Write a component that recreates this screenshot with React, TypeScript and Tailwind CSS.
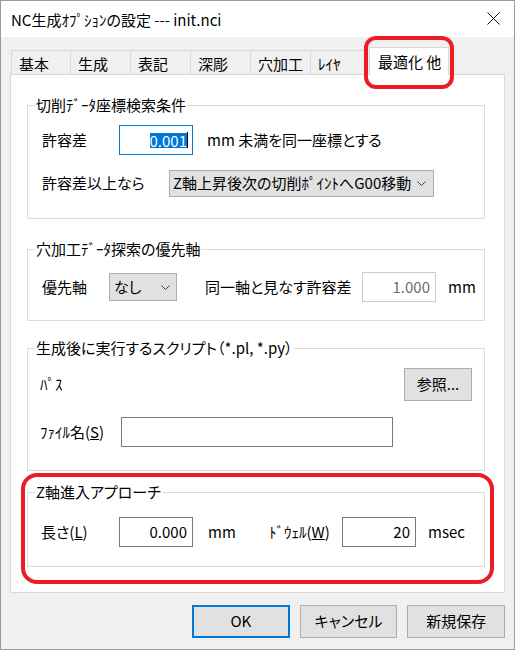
import React from "react";

function Chevron({ className }: { className?: string }) {
  return (
    <svg width="9" height="5" viewBox="0 0 9 5" className={className}>
      <polyline points="0.5,0.5 4.5,4.5 8.5,0.5" fill="none" stroke="#444" strokeWidth="1" />
    </svg>
  );
}

function Group({
  title,
  className,
  children,
}: {
  title: string;
  className: string;
  children: React.ReactNode;
}) {
  return (
    <fieldset className={`w-[458px] border border-[#dcdcdc] px-0 ${className}`}>
      <legend className="ml-[7px] px-[1px] leading-[20px]">{title}</legend>
      {children}
    </fieldset>
  );
}

function NumBox({ value, disabled }: { value: string; disabled?: boolean }) {
  return (
    <div
      className={`flex h-[30px] w-[74px] items-center justify-end border bg-white pr-[5px] ${
        disabled ? "border-[#cccccc] text-[#6d6d6d]" : "border-[#7a7a7a]"
      }`}
    >
      {value}
    </div>
  );
}

export default function App() {
  const tabs = ["基本", "生成", "表記", "深彫", "穴加工", "ﾚｲﾔ"];

  return (
    <div className="relative h-[650px] w-[515px] border border-[#9a9a9a] bg-[#f0f0f0] text-[15px] text-black font-['Noto_Sans_CJK_JP',sans-serif] [font-feature-settings:'palt']">
      {/* title bar */}
      <div className="flex h-[36px] items-center justify-between bg-white pl-[10px] pr-[14px] pt-[3px]">
        <span>NC生成ｵﾌﾟｼｮﾝの設定 --- init.nci</span>
        <svg width="13" height="13" viewBox="0 0 13 13" className="-mt-[4px]">
          <path d="M0.5 0.5 L12.5 12.5 M12.5 0.5 L0.5 12.5" stroke="#111" strokeWidth="1" />
        </svg>
      </div>

      <div className="px-[9px] pt-[10px]">
        {/* tab strip */}
        <div className="flex h-[27px] items-end pl-[1px]">
          {tabs.map((t, i) => (
            <div
              key={t}
              className={`flex h-[24px] items-center border-l border-t border-[#d9d9d9] pl-[7px] pt-[3px] ${
                i === 0 ? "w-[59px]" : "w-[60px]"
              }`}
            >
              {t}
            </div>
          ))}
          <div className="relative z-10 -mb-[1px] -ml-[1px] flex h-[28px] w-[80px] items-center border-x border-t border-[#d9d9d9] bg-white pl-[8px] pt-[1px]">
            最適化 他
          </div>
        </div>

        {/* tab panel */}
        <div className="h-[519px] w-[495px] border border-[#d9d9d9] bg-white pl-[16px] pt-[20px]">
          <Group title="切削ﾃﾞｰﾀ座標検索条件" className="h-[124px]">
            <div className="pl-[14px] pt-[10px]">
              <div className="flex h-[30px] items-center">
                <span className="w-[77px]">許容差</span>
                <div className="flex h-[30px] w-[74px] items-center justify-end border border-[#0078d7] bg-white pr-[4px]">
                  <span className="bg-[#0078d7] leading-[15px] text-white">0.001</span>
                  <span className="h-[16px] w-px bg-black" />
                </div>
                <span className="ml-[14px]">mm 未満を同一座標とする</span>
              </div>
              <div className="mt-[15px] flex h-[27px] items-center">
                <span className="w-[127px]">許容差以上なら</span>
                <div className="flex h-[27px] w-[265px] items-center justify-between border border-[#adadad] bg-[#e1e1e1] pl-[3px] pr-[7px]">
                  <span>Z軸上昇後次の切削ﾎﾟｲﾝﾄへG00移動</span>
                  <Chevron />
                </div>
              </div>
            </div>
          </Group>

          <Group title="穴加工ﾃﾞｰﾀ探索の優先軸" className="mt-[20px] h-[82px]">
            <div className="flex h-[30px] items-center pl-[14px] pt-[0px] mt-[13px]">
              <span className="w-[67px]">優先軸</span>
              <div className="flex h-[28px] w-[68px] items-center justify-between border border-[#adadad] bg-[#e1e1e1] pl-[4px] pr-[6px]">
                <span>なし</span>
                <Chevron />
              </div>
              <span className="ml-[28px] w-[157px]">同一軸と見なす許容差</span>
              <NumBox value="1.000" disabled />
              <span className="ml-[12px]">mm</span>
            </div>
          </Group>

          <Group title="生成後に実行するスクリプト（*.pl, *.py）" className="mt-[17px] h-[133px]">
            <div className="pl-[12px] pr-[12px] pt-[10px]">
              <div className="flex h-[33px] items-center justify-between">
                <span>ﾊﾟｽ</span>
                <div className="flex h-[33px] w-[68px] items-center justify-center border border-[#adadad] bg-[#e1e1e1]">
                  参照...
                </div>
              </div>
              <div className="mt-[16px] flex h-[30px] items-center">
                <span className="w-[81px]">
                  ﾌｧｲﾙ名(<span className="underline">S</span>)
                </span>
                <div className="h-[30px] w-[272px] border border-[#7a7a7a] bg-white" />
              </div>
            </div>
          </Group>

          <Group title="Z軸進入アプローチ" className="mt-[11px] h-[85px]">
            <div className="flex h-[30px] items-center pl-[13px] mt-[15px]">
              <span className="w-[78px]">
                長さ(<span className="underline">L</span>)
              </span>
              <NumBox value="0.000" />
              <span className="ml-[15px] w-[61px]">mm</span>
              <span className="w-[73px]">
                ﾄﾞｳｪﾙ(<span className="underline">W</span>)
              </span>
              <NumBox value="20" />
              <span className="ml-[12px]">msec</span>
            </div>
          </Group>
        </div>

        {/* buttons */}
        <div className="mt-[12px] flex gap-[10px] pl-[182px]">
          <div className="flex h-[33px] w-[98px] items-center justify-center border-2 border-[#0078d7] bg-[#e1e1e1]">
            OK
          </div>
          <div className="flex h-[33px] w-[98px] items-center justify-center border border-[#adadad] bg-[#e1e1e1]">
            キャンセル
          </div>
          <div className="flex h-[33px] w-[98px] items-center justify-center border border-[#adadad] bg-[#e1e1e1]">
            新規保存
          </div>
        </div>
      </div>

      {/* red annotation marks */}
      <div className="pointer-events-none absolute left-[363px] top-[35px] h-[53px] w-[90px] rounded-[12px] border-[4px] border-[#ed1c24]" />
      <div className="pointer-events-none absolute left-[20px] top-[472px] h-[111px] w-[473px] rounded-[16px] border-[4px] border-[#ed1c24]" />
    </div>
  );
}
